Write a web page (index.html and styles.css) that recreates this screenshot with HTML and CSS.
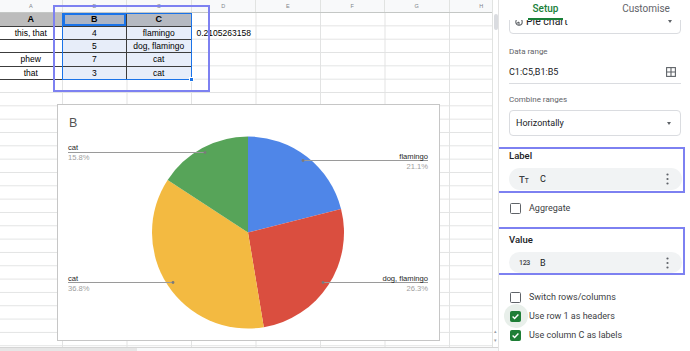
FILE: index.html
```html
<!DOCTYPE html>
<html lang="en">
<head>
  <meta charset="UTF-8">
  <title>Chart editor</title>
  <link rel="stylesheet" href="styles.css">
</head>
<body>
  <div class="app">
    <div class="sheet-area">
      <div class="sheet">
        <div class="col-heads">
          <span>A</span><span>B</span><span>C</span><span>D</span>
          <span>E</span><span>F</span><span>G</span><span>H</span>
        </div>

        <div class="grid">
          <div class="table">
            <div class="cell head">A</div>
            <div class="cell head head-active">B</div>
            <div class="cell head head-sel">C</div>

            <div class="cell">this, that</div>
            <div class="cell sel">4</div>
            <div class="cell sel">flamingo</div>

            <div class="cell"></div>
            <div class="cell sel">5</div>
            <div class="cell sel">dog, flamingo</div>

            <div class="cell">phew</div>
            <div class="cell sel">7</div>
            <div class="cell sel">cat</div>

            <div class="cell">that</div>
            <div class="cell sel">3</div>
            <div class="cell sel">cat</div>
          </div>
          <div class="range"><span class="handle"></span></div>
          <div class="cell-free">0.2105263158</div>
        </div>

        <div class="annot annot-sheet"></div>

        <div class="chart">
          <svg class="pie" width="381" height="235" viewBox="0 0 381 235">
            <text class="chart-title" x="11" y="22">B</text>
            <path fill="#4f86e8" d="M190 127.5 L190 31.5 A96 96 0 0 1 283.06 103.93 Z"/>
            <path fill="#da4e3f" d="M190 127.5 L283.06 103.93 A96 96 0 0 1 205.8 222.19 Z"/>
            <path fill="#f3ba41" d="M190 127.5 L205.8 222.19 A96 96 0 0 1 109.63 74.99 Z"/>
            <path fill="#57a459" d="M190 127.5 L109.63 74.99 A96 96 0 0 1 190 31.5 Z"/>

            <path class="leader" d="M10 47.5 H147"/>
            <circle class="leader-dot" cx="147" cy="47.5" r="1.4"/>
            <text class="slice-name" x="10" y="45">cat</text>
            <text class="slice-pct" x="10" y="55">15.8%</text>

            <path class="leader" d="M245 55.5 H370"/>
            <circle class="leader-dot" cx="245" cy="55.5" r="1.4"/>
            <text class="slice-name" x="370" y="53.5" text-anchor="end">flamingo</text>
            <text class="slice-pct" x="370" y="63.5" text-anchor="end">21.1%</text>

            <path class="leader" d="M10 177.5 H115"/>
            <circle class="leader-dot" cx="115" cy="177.5" r="1.4"/>
            <text class="slice-name" x="10" y="175.5">cat</text>
            <text class="slice-pct" x="10" y="185.5">36.8%</text>

            <path class="leader" d="M265 177.5 H370"/>
            <circle class="leader-dot" cx="265" cy="177.5" r="1.4"/>
            <text class="slice-name" x="370" y="175.5" text-anchor="end">dog, flamingo</text>
            <text class="slice-pct" x="370" y="185.5" text-anchor="end">26.3%</text>
          </svg>
        </div>
      </div>

      <div class="vscroll">
        <span class="vthumb"></span>
        <span class="arrows"><span>&#9652;</span><span>&#9662;</span></span>
      </div>

      <div class="hscroll"><span class="hthumb"></span></div>
    </div>

    <aside class="panel">
      <div class="tabs">
        <div class="tab tab-active"><span>Setup</span></div>
        <div class="tab tab-other">Customise</div>
      </div>

      <div class="panel-body">
        <div class="select select-type">
          <svg class="type-icon" width="8" height="8" viewBox="0 0 8 8">
            <circle cx="4" cy="4" r="3.2" fill="none" stroke="#5f6368" stroke-width="1.1"/>
            <path d="M4 4 V7.2 M4 4 L1.3 5.6" stroke="#5f6368" stroke-width="1.1" fill="none"/>
          </svg>
          <span>Pie chart</span>
          <span class="caret"></span>
        </div>

        <div class="field-label label-range">Data range</div>
        <div class="range-row">
          <span>C1:C5,B1:B5</span>
          <svg class="grid-icon" width="10" height="10" viewBox="0 0 10 10">
            <rect x="0.6" y="0.6" width="8.8" height="8.8" fill="none" stroke="#5f6368" stroke-width="1.1"/>
            <path d="M5 0.6 V9.4 M0.6 5 H9.4" stroke="#5f6368" stroke-width="1.1"/>
          </svg>
        </div>

        <div class="field-label label-combine">Combine ranges</div>
        <div class="select select-combine">
          <span>Horizontally</span>
          <span class="caret"></span>
        </div>

        <section class="series series-label">
          <div class="series-title">Label</div>
          <div class="chip">
            <span class="chip-icon">T<small>T</small></span>
            <span class="chip-name">C</span>
            <svg class="kebab" width="3" height="12" viewBox="0 0 3 12">
              <circle cx="1.5" cy="1.5" r="1.1"/><circle cx="1.5" cy="6" r="1.1"/><circle cx="1.5" cy="10.5" r="1.1"/>
            </svg>
          </div>
        </section>

        <label class="check check-aggregate"><span class="box"></span>Aggregate</label>

        <section class="series series-value">
          <div class="series-title">Value</div>
          <div class="chip">
            <span class="chip-icon chip-num">123</span>
            <span class="chip-name">B</span>
            <svg class="kebab" width="3" height="12" viewBox="0 0 3 12">
              <circle cx="1.5" cy="1.5" r="1.1"/><circle cx="1.5" cy="6" r="1.1"/><circle cx="1.5" cy="10.5" r="1.1"/>
            </svg>
          </div>
        </section>

        <label class="check check-switch"><span class="box"></span>Switch rows/columns</label>
        <label class="check check-row checked focused">
          <span class="box"><svg width="9" height="9" viewBox="0 0 9 9"><path d="M1.6 4.6 L3.6 6.5 L7.4 2.5" stroke="#fff" stroke-width="1.4" fill="none"/></svg></span>Use row 1 as headers
        </label>
        <label class="check check-row checked">
          <span class="box"><svg width="9" height="9" viewBox="0 0 9 9"><path d="M1.6 4.6 L3.6 6.5 L7.4 2.5" stroke="#fff" stroke-width="1.4" fill="none"/></svg></span>Use column C as labels
        </label>
      </div>
    </aside>
  </div>
</body>
</html>
```

FILE: styles.css
```css
* {
  box-sizing: border-box;
  margin: 0;
  padding: 0;
}

body {
  background-color: #ffffff;
  font-family: "Liberation Sans", Arial, sans-serif;
  overflow: hidden;
}

.app {
  display: flex;
  width: 690px;
  height: 351px;
}

/* ---------- spreadsheet ---------- */

.sheet-area {
  display: grid;
  grid-template-columns: 492px 6px;
  grid-template-rows: 346.67px 4.33px;
  width: 498px;
}

.sheet {
  position: relative;
  overflow: hidden;
}

.col-heads {
  display: grid;
  grid-template-columns: 62.5px repeat(7, 64.5px);
  height: 13.333px;
  background-color: #f8f9fa;
  border-bottom: 1px solid #c4c7c5;
}

.col-heads span {
  font-size: 5.5px;
  line-height: 12.333px;
  color: #80868b;
  text-align: center;
  border-right: 1px solid #e1e3e1;
}

.grid {
  display: grid;
  grid-template-columns: 62.5px repeat(7, 64.5px);
  grid-template-rows: repeat(25, 13.333px);
  background-image:
    linear-gradient(to right, #e2e3e3 1px, transparent 1px),
    linear-gradient(to bottom, transparent 12.333px, #e2e3e3 12.333px);
  background-size: 64.5px 100%, 100% 13.333px;
  background-position: 62px 0, 0 0;
}

.table {
  grid-column: 1 / 4;
  grid-row: 1 / 6;
  display: grid;
  grid-template-columns: 62.5px 64.5px 64.5px;
  grid-template-rows: repeat(5, 13.333px);
}

.cell {
  display: flex;
  align-items: center;
  justify-content: center;
  font-size: 8.5px;
  color: #000000;
  background-color: #ffffff;
  border-right: 1px solid #3c3c3c;
  border-bottom: 1px solid #3c3c3c;
  white-space: nowrap;
}

.cell.head {
  font-weight: bold;
  font-size: 9px;
  background-color: #bcbcbc;
}

.cell.head-sel {
  background-color: #b5b9c1;
}

.cell.head-active {
  background-color: #acb4c4;
  box-shadow: inset 0 0 0 2px #1a73e8;
}

.cell.sel {
  background-color: #e7edf9;
}

.range {
  grid-column: 2 / 4;
  grid-row: 1 / 6;
  position: relative;
  border: 1px solid #1a73e8;
  margin-left: -1px;
}

.handle {
  position: absolute;
  right: -3px;
  bottom: -3px;
  width: 5px;
  height: 5px;
  background-color: #1a73e8;
  border: 1px solid #ffffff;
}

.cell-free {
  grid-column: 4;
  grid-row: 2;
  font-size: 8.5px;
  line-height: 12.333px;
  padding-left: 5px;
  white-space: nowrap;
}

.annot {
  border: 2px solid #7d81f1;
}

.annot-sheet {
  position: absolute;
  left: 53px;
  top: 5px;
  width: 157px;
  height: 87px;
}

.chart {
  position: absolute;
  left: 57px;
  top: 104px;
  width: 383px;
  height: 237px;
  background-color: #ffffff;
  border: 1px solid #c6c6c6;
}

.pie {
  display: block;
}

.chart-title {
  font-family: "Liberation Sans", Arial, sans-serif;
  font-size: 12.5px;
  fill: #545454;
}

.slice-name {
  font-family: "Liberation Sans", Arial, sans-serif;
  font-size: 7.6px;
  fill: #1f1f1f;
}

.slice-pct {
  font-family: "Liberation Sans", Arial, sans-serif;
  font-size: 7.6px;
  fill: #9e9e9e;
}

.leader {
  stroke: #9a9a9a;
  stroke-width: 1;
  fill: none;
}

.leader-dot {
  fill: #7a7a7a;
}

.vscroll {
  display: flex;
  flex-direction: column;
  align-items: center;
  border-left: 1px solid #e1e3e1;
}

.vthumb {
  width: 4px;
  height: 16px;
  margin-top: 14px;
  border-radius: 2px;
  background-color: #dadce0;
}

.arrows {
  display: flex;
  flex-direction: column;
  margin-top: auto;
  margin-bottom: 2px;
  font-size: 5px;
  line-height: 9px;
  color: #9aa0a6;
}

.hscroll {
  grid-column: 1 / 3;
  border-top: 1px solid #d5d5d5;
  background-color: #f8f9fa;
}

.hthumb {
  display: block;
  width: 137px;
  height: 100%;
  background-color: #e6e6e6;
}

/* ---------- chart editor panel ---------- */

.panel {
  flex: 1;
  border-left: 1px solid #e3e3e3;
  font-family: Roboto, "Liberation Sans", Arial, sans-serif;
  color: #202124;
  overflow: hidden;
}

.tabs {
  position: relative;
  z-index: 1;
  display: flex;
  height: 20px;
  background-color: #ffffff;
}

.tab {
  font-size: 10px;
  font-weight: 500;
  text-align: center;
  line-height: 18px;
}

.tab-active {
  width: 93px;
  color: #188038;
}

.tab-active span {
  display: inline-block;
  height: 19.5px;
  padding: 0 5px;
  border-bottom: 2px solid #188038;
}

.tab-other {
  flex: 1;
  padding-left: 10px;
  color: #5f6368;
  font-weight: 400;
}

.panel-body {
  display: flex;
  flex-direction: column;
  padding: 0 9px 0 10px;
}

.select {
  display: flex;
  align-items: center;
  border: 1px solid #dadce0;
  border-radius: 4px;
  font-size: 9px;
}

.select-type {
  height: 28px;
  margin-top: -14px;
  padding: 3px 8px 0 5px;
  font-size: 10.5px;
}

.type-icon {
  margin-right: 3px;
}

.caret {
  margin-left: auto;
  width: 0;
  height: 0;
  border-left: 2.5px solid transparent;
  border-right: 2.5px solid transparent;
  border-top: 3px solid #5f6368;
}

.field-label {
  font-size: 8px;
  line-height: 10px;
  color: #5f6368;
}

.label-range {
  margin-top: 13px;
}

.range-row {
  display: flex;
  align-items: center;
  height: 21px;
  margin-top: 6px;
  padding-bottom: 2px;
  border-bottom: 1px solid #dadce0;
  font-size: 9px;
}

.grid-icon {
  margin-left: auto;
  margin-right: 5px;
}

.label-combine {
  margin-top: 11px;
}

.select-combine {
  height: 26px;
  margin-top: 5px;
  padding: 0 9px 0 6px;
}

.series {
  margin: 11px -4px 0 -12px;
  padding: 1px 1px 1px 10px;
  border: 2px solid #7d81f1;
}

.series-value {
  padding-top: 5px;
  padding-bottom: 0;
}

.series-title {
  font-size: 9.5px;
  font-weight: 500;
  line-height: 12px;
}

.chip {
  display: flex;
  align-items: center;
  height: 22px;
  margin-top: 6px;
  padding: 0 13px 0 10px;
  border-radius: 11px;
  background-color: #f1f3f4;
  font-size: 9px;
}

.series-value .chip {
  height: 21px;
}

.chip-icon {
  width: 10px;
  font-size: 9.5px;
  font-weight: 500;
  color: #3c4043;
}

.chip-icon small {
  font-size: 6.5px;
}

.chip-num {
  font-size: 7px;
  letter-spacing: -0.3px;
}

.chip-name {
  margin-left: 11px;
}

.kebab {
  margin-left: auto;
  fill: #5f6368;
}

.check {
  position: relative;
  z-index: 0;
  display: flex;
  align-items: center;
  height: 16px;
  font-size: 9px;
  color: #3c4043;
}

.check .box {
  position: relative;
  display: flex;
  align-items: center;
  justify-content: center;
  width: 11px;
  height: 11px;
  margin: 0 8px 0 1px;
  border: 1.5px solid #5f6368;
  border-radius: 1.5px;
}

.check.checked .box {
  background-color: #1e7e36;
  border-color: #1e7e36;
}

.check.focused .box::before {
  content: "";
  position: absolute;
  z-index: -1;
  left: -7.5px;
  top: -7.5px;
  width: 24px;
  height: 24px;
  border-radius: 50%;
  background-color: #e8efea;
}

.check-aggregate {
  margin-top: 7px;
}

.check-switch {
  margin-top: 14px;
}

.check-row {
  margin-top: 3px;
}
```
